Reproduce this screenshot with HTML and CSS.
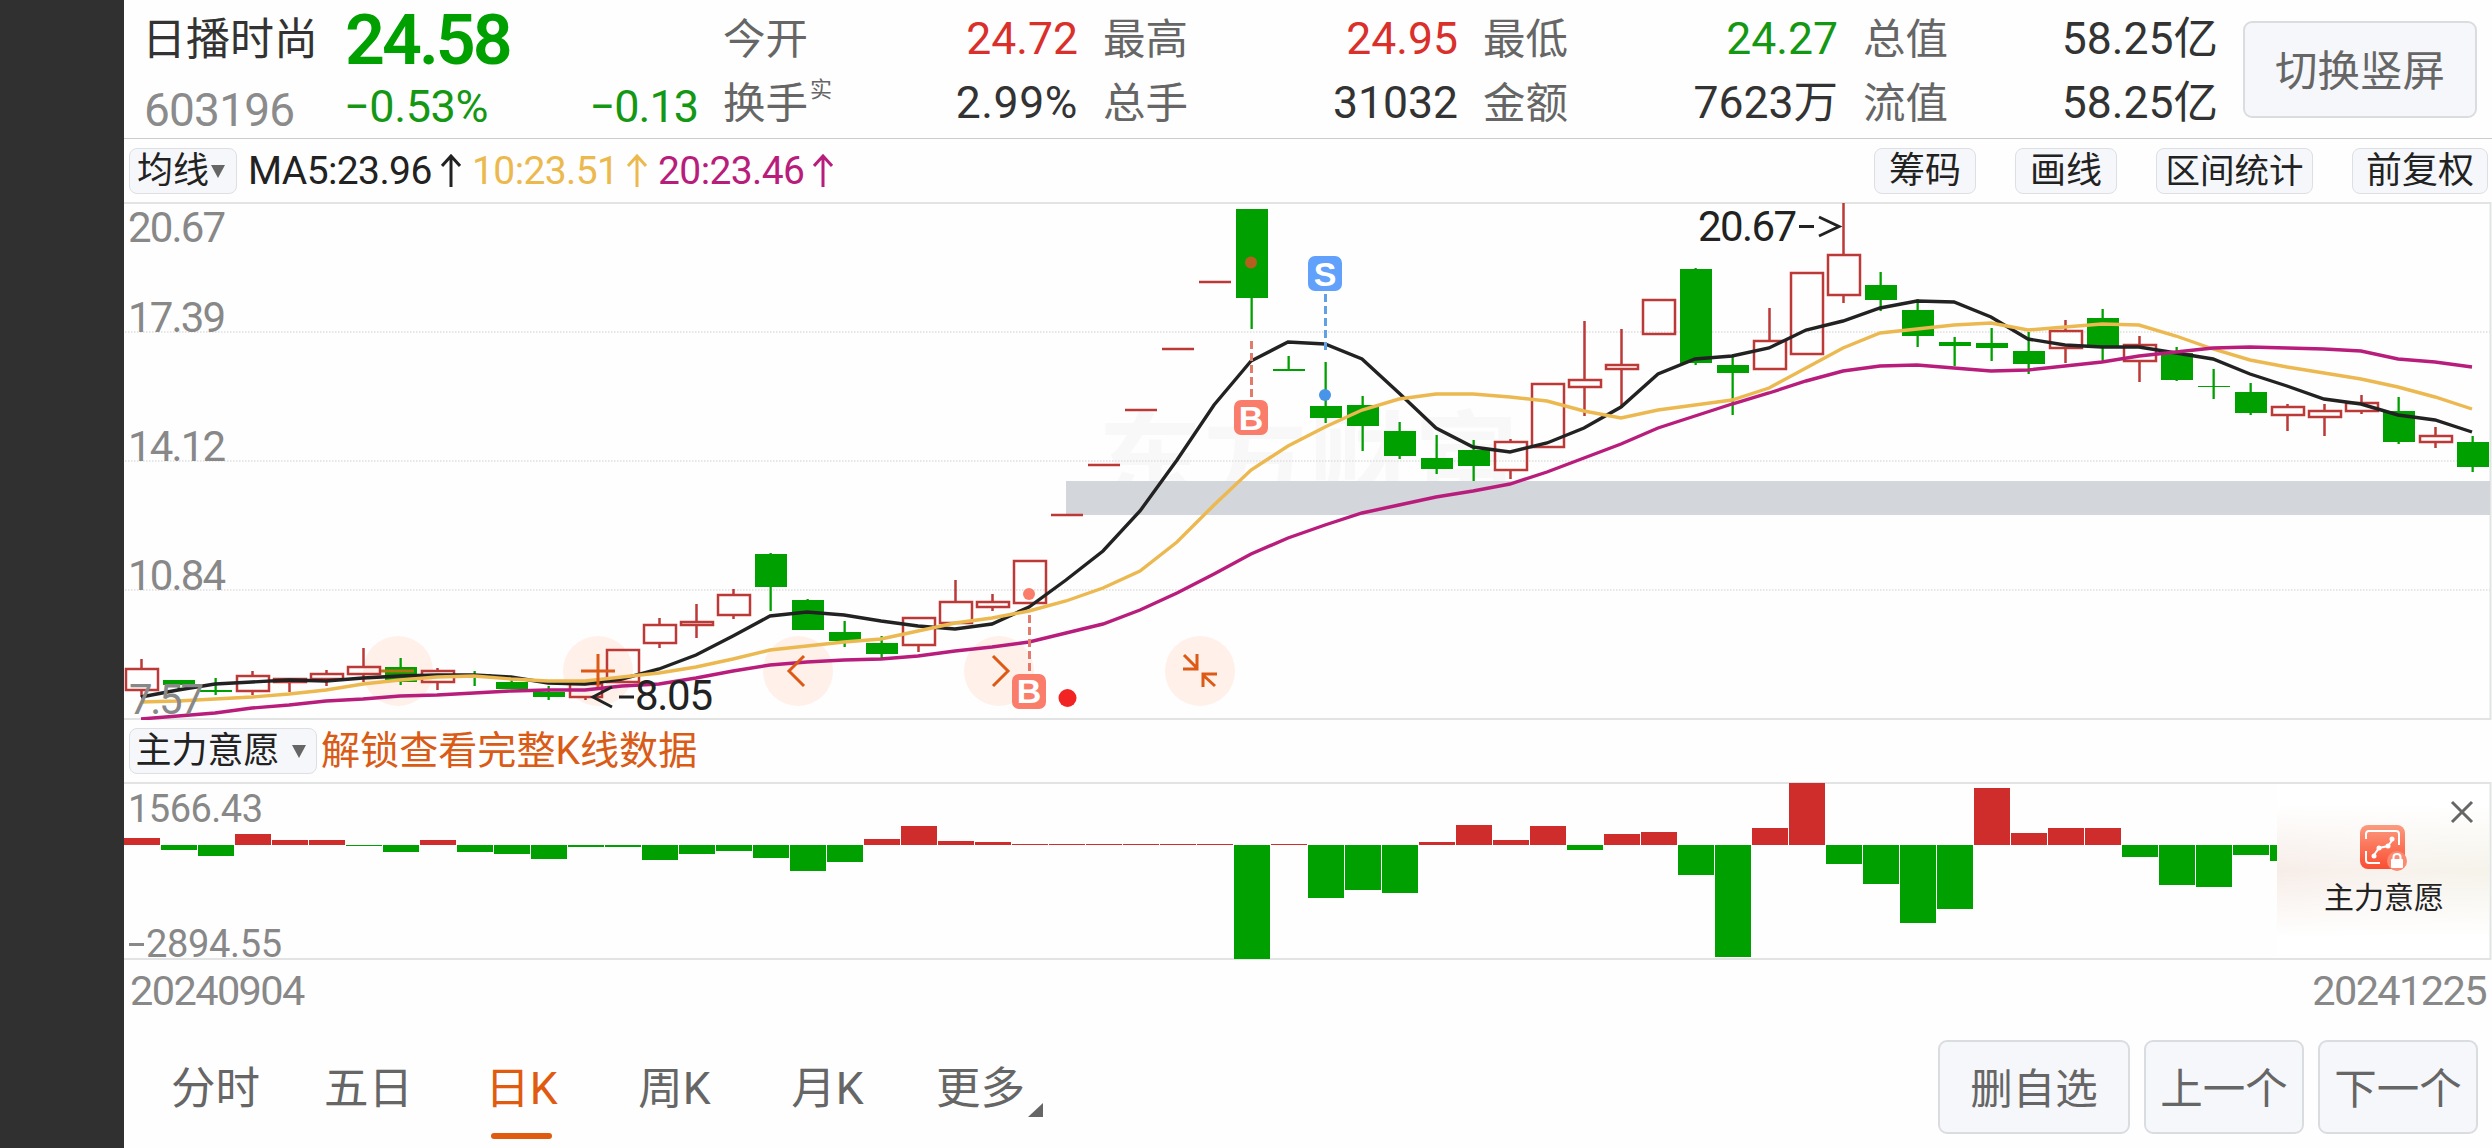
FILE: index.html
```html
<!DOCTYPE html>
<html lang="zh-CN">

<head>
    <meta charset="UTF-8">
    <meta name="viewport" content="width=device-width, initial-scale=1.0">
    <title>日播时尚 603196</title>
    <link rel="stylesheet" href="styles.css">
</head>

<body>
    <div class="side"></div>
    <div class="page">
        <header class="quote">
            <div class="stock">
                <div class="stock_name">日播时尚</div>
                <div class="stock_price">24.58</div>
                <div class="stock_code">603196</div>
                <div class="stock_change"><span class="percent">−0.53%</span><span>−0.13</span></div>
            </div>
            <dl class="quote_list">
                <div><dt>今开</dt><dd class="up">24.72</dd></div>
                <div><dt>最高</dt><dd class="up">24.95</dd></div>
                <div><dt>最低</dt><dd class="down">24.27</dd></div>
                <div><dt>总值</dt><dd>58.25亿</dd></div>
                <div><dt>换手<sup>实</sup></dt><dd class="percent">2.99%</dd></div>
                <div><dt>总手</dt><dd>31032</dd></div>
                <div><dt>金额</dt><dd>7623万</dd></div>
                <div><dt>流值</dt><dd>58.25亿</dd></div>
            </dl>
            <button type="button" class="btn btn_rotate">切换竖屏</button>
        </header>

        <div class="toolbar">
            <button type="button" class="tag tag_ma">均线<i class="caret"></i></button>
            <span class="ma ma5">MA5:23.96<svg class="arrow" viewBox="0 0 20 34"><path d="M10 33V3M1 12L10 2L19 12" /></svg></span>
            <span class="ma ma10">10:23.51<svg class="arrow" viewBox="0 0 20 34"><path d="M10 33V3M1 12L10 2L19 12" /></svg></span>
            <span class="ma ma20">20:23.46<svg class="arrow" viewBox="0 0 20 34"><path d="M10 33V3M1 12L10 2L19 12" /></svg></span>
            <div class="tags">
                <button type="button" class="tag">筹码</button>
                <button type="button" class="tag">画线</button>
                <button type="button" class="tag tag_wide">区间统计</button>
                <button type="button" class="tag tag_mid">前复权</button>
            </div>
        </div>

        <svg class="kline" viewBox="124 202 2368 518">
            <text class="watermark" x="1098" y="499" textLength="420">东方财富</text>
            <path class="frame" d="M124 203H2490.500V719H124" />
            <path class="grid" d="M125 332H2490M125 461H2490M125 590H2490" />
            <rect class="gap_band" x="1066" y="481" width="1424" height="34" />
            <g class="round">
                <circle cx="398" cy="671" r="35" />
                <circle cx="598" cy="671" r="35" />
                <circle cx="798" cy="671" r="35" />
                <circle cx="999" cy="671" r="35" />
                <circle cx="1200" cy="671" r="35" />
            </g>
            <g id="candles"></g>
            <g id="lines"></g>
            <g class="axis">
                <text x="128" y="242" textLength="98">20.67</text>
                <text x="128" y="332" textLength="98">17.39</text>
                <text x="128" y="461" textLength="98">14.12</text>
                <text x="128" y="590" textLength="98">10.84</text>
                <text x="129" y="714" textLength="75">7.57</text>
            </g>
            <g class="peak">
                <text x="1698" y="241" textLength="99">20.67</text>
                <path d="M1799 226.500H1814M1819 217L1839 226.500L1819 236" />
                <text x="635" y="710" textLength="78">8.05</text>
                <path d="M619 697H634M612 687L593 697L612 707" />
            </g>
            <g class="round_icon">
                <path class="minus" d="M381 671H414" />
                <path d="M581 671H615M598 654V687" />
                <path d="M804 656L789 671L804 686" />
                <path d="M993 656L1008 671L993 686" />
                <path d="M1184 655L1197 668M1197 654V669H1183M1215 686L1203 675M1203 687V674H1217" />
            </g>
            <!-- buy and sell marks -->
            <g class="mark buy">
                <path d="M1029.500 615V672" />
                <circle cx="1029" cy="594" r="6" />
                <rect x="1012" y="674" width="34" height="35" rx="7" />
                <text x="1029" y="703">B</text>
            </g>
            <g class="mark buy">
                <path d="M1251.500 341V398" />
                <circle class="on_body" cx="1251" cy="262.500" r="6" />
                <rect x="1234" y="400" width="34" height="35" rx="7" />
                <text x="1251" y="430">B</text>
            </g>
            <g class="mark sell">
                <path d="M1325.500 294V350" />
                <circle cx="1325" cy="395" r="6" />
                <rect x="1308" y="256" width="34" height="35" rx="7" />
                <text x="1325" y="286">S</text>
            </g>
            <circle class="news" cx="1067.500" cy="698" r="9" />
        </svg>

        <div class="toolbar">
            <button type="button" class="tag tag_index">主力意愿<i class="caret"></i></button>
            <a class="unlock">解锁查看完整K线数据</a>
        </div>

        <div class="volume">
            <svg class="volume_chart" viewBox="124 782 2368 178">
                <path class="frame" d="M124 783H2490.500V959H124" />
                <g id="bars"></g>
                <g class="axis small">
                    <text x="128" y="822" textLength="135">1566.43</text>
                    <text x="146" y="957" textLength="136">2894.55</text>
                    <path d="M129 944.500H144" />
                </g>
            </svg>
            <div class="promo">
                <svg class="promo_close" viewBox="0 0 24 24"><path d="M2 2L22 22M22 2L2 22" /></svg>
                <svg class="promo_icon" viewBox="0 0 48 46">
                    <defs>
                        <linearGradient id="coral" x1="0" y1="0" x2="0" y2="1">
                            <stop offset="0" stop-color="#fb9b7f" />
                            <stop offset="1" stop-color="#fb4d31" />
                        </linearGradient>
                    </defs>
                    <rect width="45" height="44" rx="8" fill="url(#coral)" />
                    <path class="corner" d="M6 14V9Q6 6 9 6H36Q39 6 39 9V20M6 26V35Q6 38 9 38H20" />
                    <path class="trend" d="M14 30L19 23L28 21L33 14" />
                    <circle cx="14" cy="31" r="2.500" fill="#fff" />
                    <circle cx="19" cy="23" r="2.500" fill="#fff" />
                    <circle cx="28" cy="21" r="2.500" fill="#fff" />
                    <circle cx="32" cy="14" r="2.500" fill="#fff" />
                    <circle cx="37" cy="36" r="10" fill="#fb8a72" />
                    <rect x="31" y="34" width="12" height="9" rx="1" fill="#fff" />
                    <path class="trend" d="M33.500 34V32Q33.500 29 37 29Q40.500 29 40.500 32V34" />
                </svg>
                <span>主力意愿</span>
            </div>
        </div>

        <div class="dates"><span>20240904</span><span>20241225</span></div>

        <footer class="bottom">
            <nav class="tabs">
                <a>分时</a>
                <a>五日</a>
                <a class="tab_active">日K</a>
                <a>周K</a>
                <a>月K</a>
                <a class="tab_more">更多</a>
            </nav>
            <div class="actions">
                <button type="button" class="btn btn_del">删自选</button>
                <button type="button" class="btn">上一个</button>
                <button type="button" class="btn">下一个</button>
            </div>
        </footer>
    </div>
    <script src="chart.js"></script>
</body>

</html>
```
FILE: styles.css
```css
html,
body {
    margin: 0;
    padding: 0;
}

*,
*:before,
*:after {
    box-sizing: border-box;
}

body {
    display: flex;
    width: 2492px;
    height: 1148px;
    overflow: hidden;
    background: #fefefe;
    color: #333;
    font-family: Roboto, "Noto Sans CJK SC", sans-serif;
}

button {
    padding: 0;
    font-family: inherit;
    cursor: pointer;
}

.side {
    width: 124px;
    background: #303030;
}

.page {
    width: 2368px;
}

/* quote header */
.quote {
    display: flex;
    height: 139px;
    border-bottom: 1px solid #ccc;
}

.stock {
    display: grid;
    grid-template-columns: 201px 1fr;
    grid-template-rows: 75px 64px;
    width: 599px;
    padding-left: 20px;
}

.stock_name {
    margin-left: -2px;
    font-size: 44px;
    line-height: 80px;
}

.stock_price {
    font-size: 70px;
    font-weight: 600;
    line-height: 81px;
    letter-spacing: -3px;
    color: #00a000;
}

.stock_code {
    font-size: 46px;
    line-height: 70px;
    letter-spacing: -0.8px;
    color: #8b8b8b;
}

.stock_change {
    display: flex;
    justify-content: space-between;
    padding-right: 25px;
    font-size: 45px;
    line-height: 64px;
    letter-spacing: -1px;
    color: #149814;
}

.stock_change .percent {
    margin-left: -1px;
    letter-spacing: -0.4px;
}

.quote_list {
    display: grid;
    grid-template-columns: repeat(4, 380px);
    grid-template-rows: 64px 64px;
    margin: 0;
    padding-top: 6px;
}

.quote_list>div {
    display: flex;
    justify-content: space-between;
    padding-right: 25px;
    line-height: 64px;
}

.quote_list dt {
    padding-top: 2px;
    font-size: 42.5px;
    color: #666;
}

.quote_list dd {
    margin: 0;
    padding-top: 1px;
    font-size: 44.5px;
}

.quote_list .percent {
    letter-spacing: 0.6px;
}

.quote_list sup {
    display: inline-block;
    margin-left: 2px;
    font-size: 22px;
    line-height: 22px;
    vertical-align: 21px;
}

.quote_list .up {
    color: #d9302c;
}

.quote_list .down {
    color: #149814;
}

.btn {
    width: 160px;
    height: 94px;
    padding-bottom: 4px;
    border: 2px solid #dadde0;
    border-radius: 9px;
    background: #f6f7fa;
    font-size: 42.5px;
    color: #666;
}

.btn_rotate {
    width: 234px;
    height: 97px;
    margin-top: 21px;
}

/* toolbars above each chart */
.toolbar {
    display: flex;
    align-items: center;
    height: 63px;
    padding: 0 4px 0 5px;
}

.kline+.toolbar {
    height: 62px;
}

.tag {
    width: 102px;
    height: 46px;
    border: 1px solid #dcdfe3;
    border-radius: 8px;
    background: #f6f7fa;
    font-size: 36px;
    line-height: 42px;
    color: #222;
}

.tags {
    display: flex;
    gap: 39px;
    margin-left: auto;
}

.tag_wide {
    width: 157px;
    font-size: 34.5px;
}

.tag_mid {
    width: 136px;
}

.tag_ma {
    width: 108px;
    margin-right: 11px;
    padding-right: 4px;
}

.tag_index {
    width: 188px;
    margin-right: 4px;
    padding-right: 5px;
}

.caret {
    display: inline-block;
    margin-left: 2px;
    border: 7.5px solid transparent;
    border-top: 13px solid #666;
    border-bottom: 0;
    vertical-align: 5px;
}

.tag_index .caret {
    margin-left: 12px;
}

.ma {
    display: flex;
    align-items: center;
    font-size: 39px;
    letter-spacing: -0.6px;
}

.arrow {
    width: 20px;
    height: 34px;
    margin-left: 9px;
    fill: none;
    stroke: currentColor;
    stroke-width: 3;
}

.ma5 {
    width: 224px;
    color: #222;
}

.ma10 {
    width: 186px;
    color: #ecb94f;
}

.ma20 {
    color: #b81d7c;
}

.unlock {
    font-size: 39.1px;
    line-height: 60px;
    color: #d95b16;
}

/* candle chart */
.kline,
.volume_chart {
    display: block;
    width: 2368px;
}

.kline {
    height: 518px;
}

.frame {
    fill: none;
    stroke: #e2e3e3;
    stroke-width: 2;
}

.grid {
    stroke: #dedede;
    stroke-width: 1.5;
    stroke-dasharray: 1.5 1.5;
}

.watermark {
    font-size: 104px;
    font-weight: 700;
    fill: #f8f8f8;
}

.gap_band {
    fill: #d3d6db;
}

.round {
    fill: #fff0e9;
}

.round_icon {
    fill: none;
    stroke: #dc5a16;
    stroke-width: 3;
}

.round_icon .minus {
    stroke: #b57413;
}

.candle_up {
    fill: none;
    stroke: #bb3a37;
    stroke-width: 2.5;
}

.candle_down {
    fill: #00a000;
}

.bar_up {
    fill: #cf2d2c;
}

.ma_line {
    fill: none;
    stroke-width: 3.4;
}

.ma_line.l5 {
    stroke: #222;
}

.ma_line.l10 {
    stroke: #ecb850;
}

.ma_line.l20 {
    stroke: #b81d7c;
}

.axis {
    font-size: 42px;
    fill: #888;
    stroke-width: 3;
}

.axis path {
    stroke: #888;
}

.axis.small {
    font-size: 38px;
}

.peak text {
    font-size: 42px;
    fill: #222;
}

.peak path {
    fill: none;
    stroke: #222;
    stroke-width: 3;
}

.mark path {
    stroke-width: 3;
    stroke-dasharray: 8 4;
}

.mark text {
    font: 700 34px "Liberation Sans", sans-serif;
    text-anchor: middle;
    fill: #fff;
}

.buy {
    fill: #fa7d6c;
}

.buy path {
    stroke: #e37b6d;
}

.buy .on_body {
    fill: #b55f1e;
}

.sell {
    fill: #62a1fb;
}

.sell path {
    stroke: #62a0e6;
}

.sell circle {
    fill: #4794e8;
}

.news {
    fill: #f12323;
}

/* volume chart */
.volume {
    position: relative;
}

.volume_chart {
    height: 178px;
}

.promo {
    position: absolute;
    top: 2px;
    right: 3px;
    display: flex;
    flex-direction: column;
    align-items: center;
    width: 212px;
    height: 174px;
    padding-top: 41px;
    background: linear-gradient(#fff 12%, rgba(255, 255, 255, 0) 50%, #fff 88%), linear-gradient(90deg, #f7ede8, #f8f2ed 50%, #f5f3ea);
    font-size: 30px;
    line-height: 36px;
    color: #222;
}

.promo span {
    margin-left: 2px;
}

.promo_icon {
    width: 48px;
    height: 46px;
    margin: 0 0 9px 2px;
}

.promo_icon path {
    fill: none;
    stroke: #fff;
    stroke-width: 2;
}

.promo_close {
    position: absolute;
    top: 16px;
    right: 15px;
    width: 24px;
    height: 24px;
    stroke: #666;
    stroke-width: 3;
}

.dates {
    display: flex;
    justify-content: space-between;
    height: 62px;
    padding: 0 6px 0 6px;
    font-size: 41.5px;
    line-height: 62px;
    letter-spacing: -1.6px;
    color: #888;
}

/* period tabs */
.bottom {
    display: flex;
    justify-content: space-between;
    height: 126px;
    padding: 18px 14px 0 15px;
}

.tabs {
    display: flex;
}

.tabs a {
    position: relative;
    width: 153px;
    font-size: 44.5px;
    line-height: 98px;
    text-align: center;
    color: #666;
}

.tabs .tab_active {
    color: #e05a10;
}

.tab_active:after {
    content: '';
    position: absolute;
    left: 46px;
    bottom: 9px;
    width: 61px;
    height: 6px;
    border-radius: 3px;
    background: #e05a10;
}

.tab_more:after {
    content: '';
    position: absolute;
    left: 124px;
    top: 63px;
    border-left: 15px solid transparent;
    border-bottom: 14px solid #666;
}

.actions {
    display: flex;
    gap: 14px;
}

.btn_del {
    width: 192px;
}
```
FILE: chart.js
```js
var STEP = 37; // distance between two candles
var FIRST = 141; // centre of the first candle
var ZERO = 845; // zero line of the volume chart

// type, high, top, bottom, low
var candles = [
    ['r', 659, 668, 691, 697], ['g', 680, 680, 685, 689], ['g', 678, 690, 692, 695], ['r', 671, 675, 692, 695],
    ['r', 678, 678, 683, 692], ['r', 670, 673, 680, 686], ['r', 648, 666, 675, 682], ['g', 658, 667, 682, 685],
    ['r', 668, 670, 683, 690], ['g', 671, 674, 676, 686], ['g', 680, 682, 689, 689], ['g', 686, 692, 697, 700],
    ['r', 682, 683, 698, 700], ['r', 649, 649, 683, 683], ['r', 618, 624, 644, 648], ['r', 604, 621, 626, 638],
    ['r', 589, 594, 616, 619], ['g', 553, 554, 587, 611], ['g', 599, 600, 630, 630], ['g', 621, 632, 641, 647],
    ['g', 636, 643, 654, 658], ['r', 617, 617, 646, 652], ['r', 580, 601, 624, 624], ['r', 594, 601, 608, 611],
    ['r', 560, 560, 604, 604], ['r', 514, 514, 516, 516], ['r', 464, 464, 466, 466], ['r', 409, 409, 411, 411],
    ['r', 348, 348, 350, 350], ['r', 281, 281, 283, 283], ['g', 209, 209, 298, 329], ['g', 356, 369, 371, 371],
    ['g', 362, 406, 418, 423], ['g', 396, 405, 426, 451], ['g', 422, 431, 456, 459], ['g', 435, 458, 469, 474],
    ['g', 440, 450, 466, 481], ['r', 439, 441, 471, 479], ['r', 383, 383, 448, 448], ['r', 321, 379, 388, 416],
    ['r', 329, 364, 370, 408], ['r', 299, 299, 335, 335], ['g', 268, 269, 363, 365], ['g', 357, 365, 373, 415],
    ['r', 308, 340, 370, 370], ['r', 272, 272, 355, 355], ['r', 203, 254, 296, 303], ['g', 272, 285, 300, 311],
    ['g', 299, 310, 336, 347], ['g', 337, 342, 346, 366], ['g', 328, 343, 348, 361], ['g', 332, 351, 364, 374],
    ['r', 320, 330, 349, 363], ['g', 309, 318, 348, 362], ['r', 336, 344, 362, 382], ['g', 347, 353, 380, 381],
    ['g', 369, 386, 387, 399], ['g', 383, 392, 413, 415], ['r', 404, 406, 416, 431], ['r', 404, 410, 418, 436],
    ['r', 395, 402, 412, 414], ['g', 397, 411, 442, 444], ['r', 427, 435, 443, 448], ['g', 436, 442, 467, 472]
];

var averages = {
    l5: [697, 690, 684, 682, 680, 681, 678, 676, 675, 675, 677, 683, 684, 679, 669, 655, 636, 616, 612, 615, 621,
        626, 629, 624, 607, 580, 551, 511, 460, 405, 361, 342, 344, 359, 393, 428, 447, 452, 443, 428, 407, 374,
        359, 356, 348, 330, 321, 308, 301, 302, 317, 339, 345, 347, 347, 353, 359, 374, 386, 399, 404, 415, 420, 432],
    l10: [702, 701, 699, 697, 694, 690, 684, 680, 677, 676, 679, 681, 681, 677, 673, 667, 659, 650, 646, 642, 639,
        631, 623, 618, 611, 601, 588, 571, 542, 505, 470, 446, 427, 410, 399, 394, 394, 397, 401, 411, 418, 410,
        405, 400, 388, 368, 348, 333, 329, 325, 323, 330, 327, 324, 325, 336, 349, 360, 367, 373, 379, 387, 397, 409],
    l20: [719, 716, 713, 708, 705, 701, 699, 696, 695, 693, 691, 690, 690, 686, 684, 678, 671, 665, 662, 660, 659,
        656, 651, 647, 642, 633, 624, 610, 593, 574, 554, 538, 525, 513, 505, 497, 491, 484, 472, 458, 444, 428,
        416, 404, 393, 381, 371, 366, 365, 368, 371, 370, 366, 362, 356, 352, 348, 347, 348, 349, 351, 359, 362, 367]
};

// end of each bar, above the zero line it is red
var volumes = [838, 850, 856, 834, 840, 840, 846, 852, 840, 852, 854, 859, 847, 847, 860, 854, 851, 858, 871, 862,
    839, 826, 841, 842, 844, 844, 844, 844, 844, 844, 959, 844, 898, 890, 893, 842, 825, 840, 826, 850, 834, 832,
    875, 957, 828, 783, 864, 884, 923, 909, 788, 833, 828, 828, 857, 885, 887, 855, 861];

function draw(parent, name, attrs) {
    var el = document.createElementNS('http://www.w3.org/2000/svg', name);
    for (var key in attrs) {
        el.setAttribute(key, attrs[key]);
    }
    document.getElementById(parent).appendChild(el);
}

candles.forEach(function (c, i) {
    var x = FIRST + i * STEP;
    var high = c[1], top = c[2], bottom = c[3], low = c[4];
    if (c[0] === 'g') {
        draw('candles', 'path', {
            'class': 'candle_down',
            d: 'M' + (x - 15) + ' ' + top + 'h32V' + bottom + 'h-32zM' + (x - 0.5) + ' ' + high + 'h2.3V' + low + 'h-2.3z'
        });
    } else if (bottom - top <= 2) {
        draw('candles', 'path', { 'class': 'candle_up', d: 'M' + (x - 15) + ' ' + (top + 1) + 'h32' });
    } else {
        draw('candles', 'path', {
            'class': 'candle_up',
            d: 'M' + (x - 15) + ' ' + (top + 1) + 'h32V' + (bottom - 1) + 'h-32z' +
                'M' + (x + 0.5) + ' ' + high + 'V' + top + 'M' + (x + 0.5) + ' ' + bottom + 'V' + low
        });
    }
});

Object.keys(averages).forEach(function (key) {
    var points = averages[key].map(function (y, i) {
        return (FIRST + i * STEP) + ',' + y;
    });
    draw('lines', 'polyline', { 'class': 'ma_line ' + key, points: points.join(' ') });
});

volumes.forEach(function (y, i) {
    draw('bars', 'rect', {
        'class': y < ZERO ? 'bar_up' : 'candle_down',
        x: 124 + i * STEP,
        y: Math.min(y, ZERO),
        width: 36,
        height: Math.abs(y - ZERO)
    });
});
```
